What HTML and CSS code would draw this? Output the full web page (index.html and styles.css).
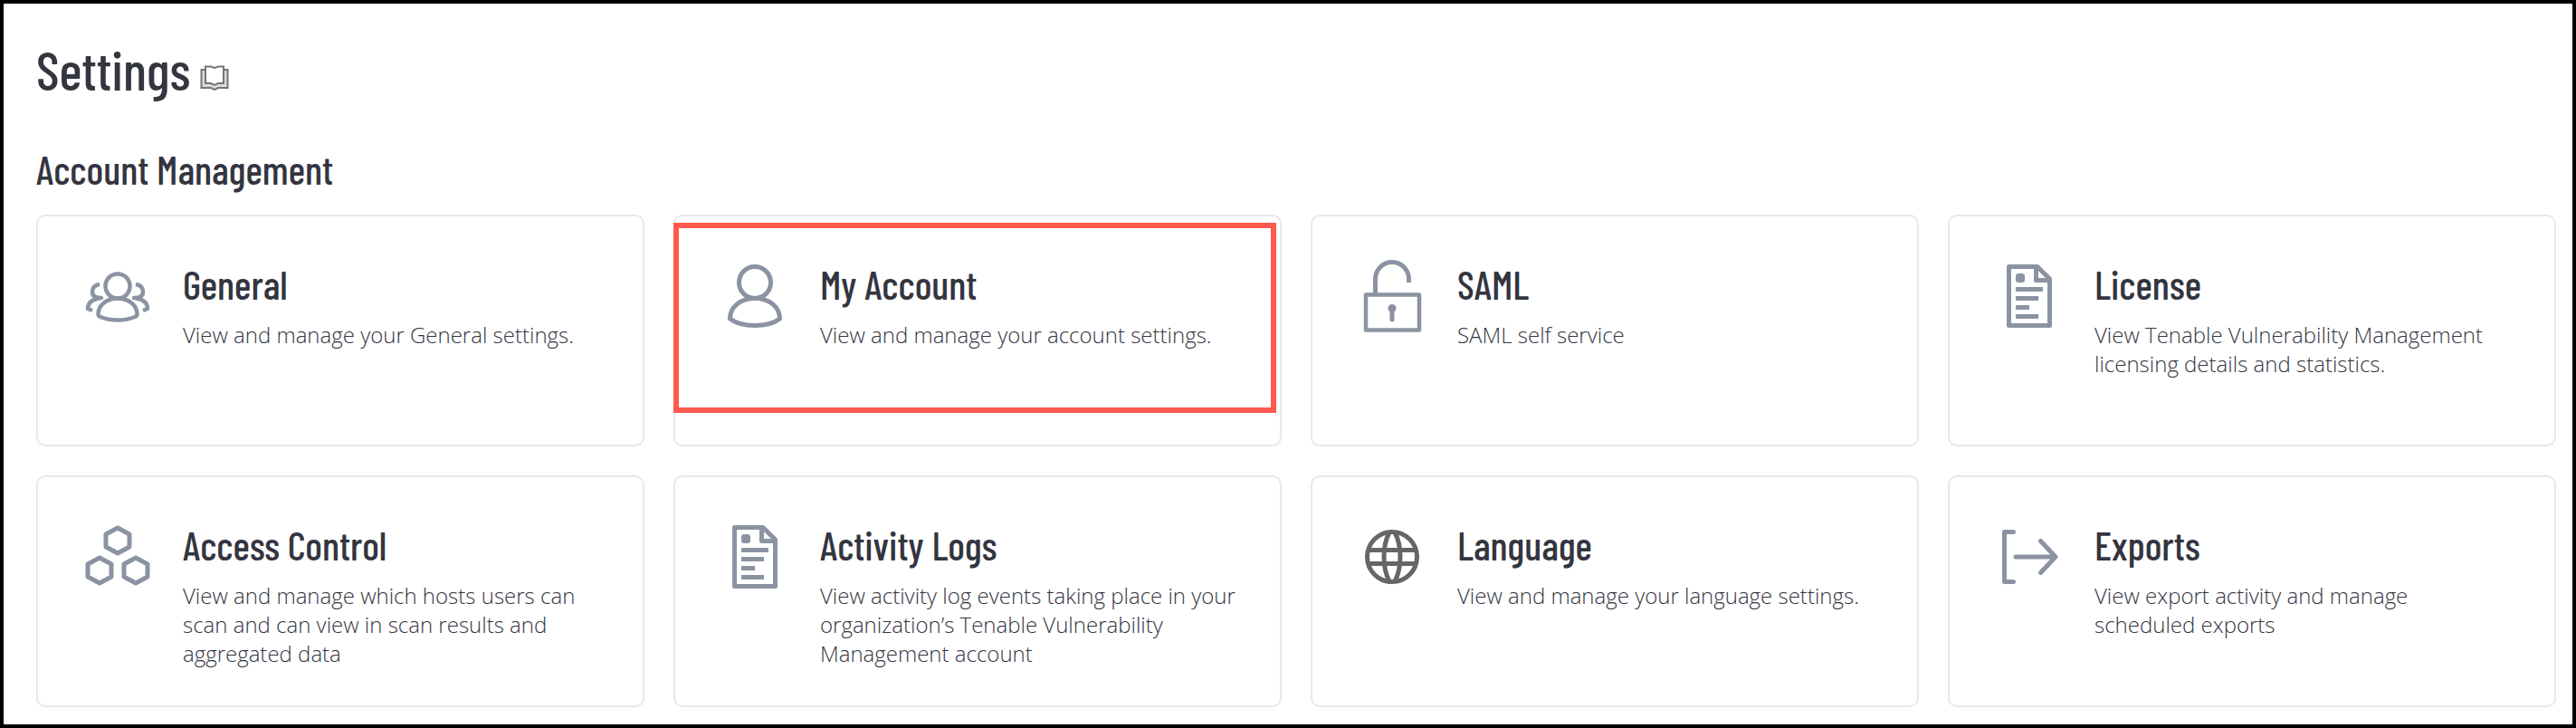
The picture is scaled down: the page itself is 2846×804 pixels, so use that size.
FILE: index.html
```html
<!DOCTYPE html>
<html lang="en">
<head>
    <meta charset="UTF-8">
    <meta name="viewport" content="width=device-width, initial-scale=1.0">
    <title>Settings</title>
    <link rel="stylesheet" href="styles.css">
</head>
<body>

    <header class="page-header">
        <h1>Settings</h1>
        <a class="docs-link" href="#" aria-label="Documentation">
            <svg viewBox="0 0 32 28">
                <path class="pages" d="M2 5H6V21H12L16 23L20 21H26V5H30V25H20L16 27L12 25H2Z"/>
                <path d="M6 1.5H12L16 3L20 1.5H26V20H20L16 22L12 20H6Z"/>
                <path d="M5 5H1.5V25H12L16 27L20 25H30.5V5H27"/>
            </svg>
        </a>
    </header>

    <main>
        <h2 class="section-title">Account Management</h2>

        <div class="cards">
            <a class="card" href="#">
                <svg class="icon" viewBox="0 0 80 80">
                    <g stroke-width="4.5">
                        <circle cx="40" cy="29" r="13.5"/>
                        <path d="M18.5 60C18.5 50 28 42.5 40 42.5S61.5 50 61.5 60Q61.5 62 59 63C53 65.5 47 66.5 40 66.5S27 65.5 21 63Q18.5 62 18.5 60Z"/>
                        <path d="M20 27C13 28 12 32 12 35.5C12 40 16 42 22 42C13 43 7 47 7 54L12 56"/>
                        <path d="M60 27C67 28 68 32 68 35.5C68 40 64 42 58 42C67 43 73 47 73 54L68 56"/>
                    </g>
                </svg>
                <div class="card-text">
                    <h3>General</h3>
                    <p>View and manage your General settings.</p>
                </div>
            </a>

            <a class="card highlighted" href="#">
                <svg class="icon" viewBox="0 0 80 80">
                    <circle cx="40" cy="25" r="17.5"/>
                    <path d="M12.5 65C12.5 52 24 42.5 40 42.5S67.5 52 67.5 65C61 70 51 72.5 40 72.5S19 70 12.5 65Z"/>
                </svg>
                <div class="card-text">
                    <h3>My Account</h3>
                    <p>View and manage your account settings.</p>
                </div>
            </a>

            <a class="card" href="#">
                <svg class="icon" viewBox="0 0 80 80">
                    <rect x="11" y="38.5" width="59" height="39" stroke-width="4.5"/>
                    <path d="M21.5 38V21A18.5 18.5 0 0 1 58.5 21V25"/>
                    <circle class="solid" cx="40" cy="53.5" r="4.5"/>
                    <path stroke-linecap="round" d="M40 55V66"/>
                </svg>
                <div class="card-text">
                    <h3>SAML</h3>
                    <p>SAML self service</p>
                </div>
            </a>

            <a class="card" href="#">
                <svg class="icon" viewBox="0 0 80 80">
                    <path d="M17.5 7.5H49L62.5 21V72.5H17.5Z"/>
                    <path d="M47.5 7V22.5H62"/>
                    <rect class="solid" x="25" y="15" width="10" height="10" rx="3"/>
                    <path d="M25 32.5H55M25 42.5H50M25 52.5H40M25 62.5H50"/>
                </svg>
                <div class="card-text">
                    <h3>License</h3>
                    <p>View Tenable Vulnerability Management licensing details and statistics.</p>
                </div>
            </a>

            <a class="card" href="#">
                <svg class="icon" viewBox="0 0 80 80">
                    <path d="M40 8L53 15V29L40 36L27 29V15Z"/>
                    <path d="M20 41L33 48V62L20 69L7 62V48Z"/>
                    <path d="M60 41L73 48V62L60 69L47 62V48Z"/>
                </svg>
                <div class="card-text">
                    <h3>Access Control</h3>
                    <p>View and manage which hosts users can scan and can view in scan results and aggregated data</p>
                </div>
            </a>

            <a class="card" href="#">
                <svg class="icon" viewBox="0 0 80 80">
                    <path d="M17.5 7.5H49L62.5 21V72.5H17.5Z"/>
                    <path d="M47.5 7V22.5H62"/>
                    <rect class="solid" x="25" y="15" width="10" height="10" rx="3"/>
                    <path d="M25 32.5H55M25 42.5H50M25 52.5H40M25 62.5H50"/>
                </svg>
                <div class="card-text">
                    <h3>Activity Logs</h3>
                    <p>View activity log events taking place in your organization’s Tenable Vulnerability Management account</p>
                </div>
            </a>

            <a class="card" href="#">
                <svg class="icon icon-dark" viewBox="0 0 80 80">
                    <circle cx="40" cy="40" r="27.5"/>
                    <path d="M14 32.5H66M14 47.5H66"/>
                    <path d="M37 13C29 28 29 52 37 67M43 13C51 28 51 52 43 67"/>
                </svg>
                <div class="card-text">
                    <h3>Language</h3>
                    <p>View and manage your language settings.</p>
                </div>
            </a>

            <a class="card" href="#">
                <svg class="icon" viewBox="0 0 80 80">
                    <g stroke-linecap="round">
                        <path d="M22.5 12.5H12.5V67.5H22.5"/>
                        <path d="M25 40H69M52.5 22.5L69 40L52.5 57.5"/>
                    </g>
                </svg>
                <div class="card-text">
                    <h3>Exports</h3>
                    <p>View export activity and manage scheduled exports</p>
                </div>
            </a>
        </div>
    </main>

</body>
</html>
```
FILE: styles.css
```css
* {
    box-sizing: border-box;
}
body {
    margin: 0;
    min-height: 100vh;
    padding: 36px 18px 18px 36px;
    border: 4px solid #000;
    background-color: #fff;
    color: #33353f;
    font-family: "Open Sans", sans-serif;
}
h1, h2, h3 {
    margin: 0;
    font-family: "Barlow Condensed", "Open Sans", sans-serif;
    font-weight: 500;
}
h1 {
    font-size: 60px;
    line-height: 72px;
}
h2, h3 {
    font-size: 44px;
    line-height: 54px;
}
.page-header {
    display: flex;
    align-items: baseline;
    gap: 10px;
    margin-bottom: 48px;
}
.docs-link svg {
    width: 32px;
    height: 28px;
    fill: none;
    stroke: #757575;
    stroke-width: 2;
}
.docs-link .pages {
    fill: #ddd;
    stroke: none;
}
.section-title {
    margin-bottom: 23px;
}
.cards {
    display: grid;
    grid-template-columns: repeat(4, 1fr);
    gap: 32px;
}
.card {
    position: relative;
    display: flex;
    align-items: flex-start;
    gap: 32px;
    min-height: 256px;
    padding: 48px 48px 32px;
    border: 2px solid #e8e8ee;
    border-radius: 10px;
    color: inherit;
    text-decoration: none;
}
.card-text {
    flex: 1;
}
.card p {
    margin: 13px 0 0;
    font-size: 24px;
    font-weight: 300;
    line-height: 32px;
}
.icon {
    flex: none;
    width: 80px;
    height: 80px;
    fill: none;
    stroke: #8b93a3;
    stroke-width: 5;
    stroke-linejoin: round;
}
.icon .solid {
    fill: #8b93a3;
    stroke: none;
}
.icon-dark {
    stroke: #666;
}
/* red frame over the card */
.highlighted::after {
    content: "";
    position: absolute;
    top: 7px;
    right: 4px;
    bottom: 35px;
    left: -2px;
    border: 6px solid #ff5a4d;
}
```
